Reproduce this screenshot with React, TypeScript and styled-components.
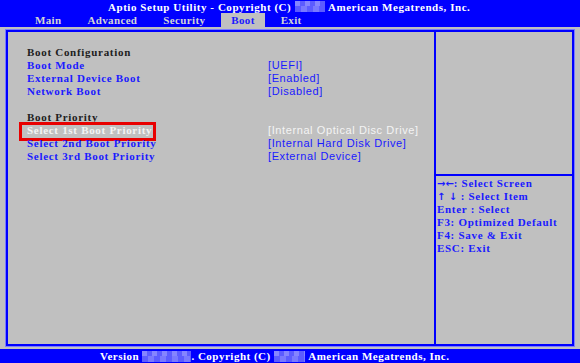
import React from "react";
import styled, { createGlobalStyle } from "styled-components";

const BLUE = "#0000ff";
const GRAY = "#c0c0c0";

const GlobalStyle = createGlobalStyle`
  html, body {
    margin: 0;
    padding: 0;
    background: ${GRAY};
  }
`;

const TABS = ["Main", "Advanced", "Security", "Boot", "Exit"];

const ITEMS = [
    { label: "Boot Configuration", kind: "heading" },
    { label: "Boot Mode", value: "[UEFI]" },
    { label: "External Device Boot", value: "[Enabled]" },
    { label: "Network Boot", value: "[Disabled]" },
    { label: "", kind: "blank" },
    { label: "Boot Priority", kind: "heading" },
    { label: "Select 1st Boot Priority", value: "[Internal Optical Disc Drive]", selected: true },
    { label: "Select 2nd Boot Priority", value: "[Internal Hard Disk Drive]" },
    { label: "Select 3rd Boot Priority", value: "[External Device]" },
];

const HELP = [
    { keys: "\u2192\u2190", text: ": Select Screen" },
    { keys: "\u2191 \u2193", text: " : Select Item" },
    { keys: "", text: "Enter : Select" },
    { keys: "", text: "F3: Optimized Default" },
    { keys: "", text: "F4: Save & Exit" },
    { keys: "", text: "ESC: Exit" },
];

export default function App() {
    return (
        <Screen>
            <GlobalStyle />
            <Header>
                <TitleRow>
                    Aptio Setup Utility - Copyright (C)&nbsp;<Blur $w={30} />&nbsp;American Megatrends, Inc.
                </TitleRow>
                <TabRow>
                    {TABS.map((tab) => (
                        <Tab key={tab} $active={tab === "Boot"}>{tab}</Tab>
                    ))}
                </TabRow>
            </Header>
            <Body>
                <Frame>
                    <LeftPanel>
                        {ITEMS.map((item, index) => (
                            <Row key={index}>
                                <Label $kind={item.kind} $selected={item.selected}>{item.label}</Label>
                                {item.value && <Value $selected={item.selected}>{item.value}</Value>}
                            </Row>
                        ))}
                    </LeftPanel>
                    <RightPanel>
                        <HelpTop />
                        <HelpList>
                            {HELP.map((line) => (
                                <HelpLine key={line.text}>
                                    {line.keys && <Arrows>{line.keys}</Arrows>}
                                    {line.text}
                                </HelpLine>
                            ))}
                        </HelpList>
                    </RightPanel>
                </Frame>
            </Body>
            <Footer>
                Version&nbsp;<Blur $w={49} />. Copyright (C)&nbsp;<Blur $w={31} />&nbsp;American Megatrends, Inc.
            </Footer>
        </Screen>
    );
}

const Screen = styled.div`
    display: flex;
    flex-direction: column;
    width: 580px;
    height: 363px;
    background: ${GRAY};
    font-family: "Liberation Serif", "DejaVu Serif", serif;
    font-weight: bold;
    font-size: 11px;
    overflow: hidden;
`

const Header = styled.div`
    display: flex;
    flex-direction: column;
    height: 27px;
    background: ${BLUE};
`

const TitleRow = styled.div`
    display: flex;
    align-items: center;
    height: 13px;
    padding-left: 108px;
    color: #ffffff;
    letter-spacing: 0.55px;
    white-space: nowrap;
`

const Blur = styled.span<{ $w: number }>`
    display: inline-block;
    width: ${(p) => p.$w}px;
    height: 11px;
    background:
        linear-gradient(90deg, rgba(160, 160, 255, 0.6) 50%, transparent 50%) 0 0 / 10px 5px,
        linear-gradient(90deg, transparent 50%, rgba(140, 140, 255, 0.6) 50%) 0 5px / 12px 6px no-repeat,
        #5c5cff;
    background-repeat: repeat-x;
`

const TabRow = styled.div`
    display: flex;
    align-items: stretch;
    height: 14px;
    padding-left: 25px;
    gap: 6px;
`

const Tab = styled.div<{ $active?: boolean }>`
    display: flex;
    align-items: center;
    padding: 0 10px;
    letter-spacing: 0.35px;
    color: ${(p) => (p.$active ? "#1a1aff" : "#d4d4d4")};
    background: ${(p) => (p.$active ? GRAY : "transparent")};
`

const Body = styled.div`
    flex: 1;
    display: flex;
    padding: 3px 6px;
`

const Frame = styled.div`
    flex: 1;
    display: flex;
    border: 2px solid ${BLUE};
    box-shadow: 0 0 0 1px #7a7aff;
`

const LeftPanel = styled.div`
    flex: 1;
    display: flex;
    flex-direction: column;
    padding: 14px 0 0 19px;
`

const Row = styled.div`
    display: grid;
    grid-template-columns: 241px 1fr;
    height: 13px;
    line-height: 13px;
    white-space: nowrap;
`

const Label = styled.span<{ $kind?: string; $selected?: boolean }>`
    position: relative;
    justify-self: start;
    letter-spacing: 0.7px;
    color: ${(p) => (p.$selected ? "#f4f4f4" : p.$kind === "heading" ? "#202020" : "#1a1aff")};

    ${(p) => p.$selected && `
        &::after {
            content: "";
            position: absolute;
            top: -2px;
            bottom: -4px;
            left: -8px;
            right: -4px;
            border: 3px solid #e80000;
        }
    `}
`

const Value = styled.span<{ $selected?: boolean }>`
    font-family: "Liberation Sans", Arial, sans-serif;
    font-weight: normal;
    font-size: 11px;
    letter-spacing: 0.6px;
    color: ${(p) => (p.$selected ? "#f4f4f4" : "#1a1aff")};
`

const RightPanel = styled.div`
    display: flex;
    flex-direction: column;
    width: 136px;
    border-left: 2px solid ${BLUE};
`

const HelpTop = styled.div`
    height: 142px;
    border-bottom: 2px solid ${BLUE};
`

const HelpList = styled.div`
    display: flex;
    flex-direction: column;
    padding: 1px 0 0 1px;
`

const HelpLine = styled.div`
    height: 13px;
    line-height: 13px;
    color: #1a1aff;
    letter-spacing: 0.7px;
    white-space: nowrap;
`

const Arrows = styled.span`
    font-family: "DejaVu Sans", sans-serif;
    font-size: 10px;
    letter-spacing: 0;
`

const Footer = styled.div`
    display: flex;
    align-items: center;
    height: 14px;
    padding-left: 100px;
    background: ${BLUE};
    color: #ffffff;
    letter-spacing: 0.5px;
    white-space: nowrap;
`
